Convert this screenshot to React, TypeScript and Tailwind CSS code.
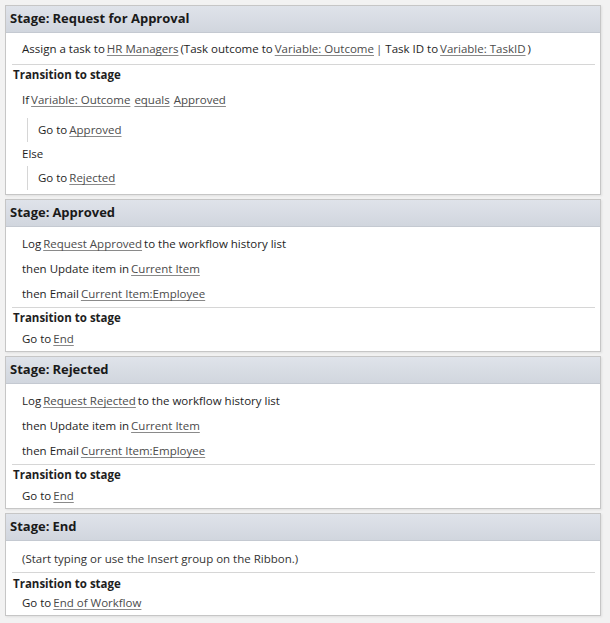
import React from 'react';

// Workflow stage designer view
const Link: React.FC<{ children: React.ReactNode }> = ({ children }) => (
  <span className="mx-[2px] text-[#4b4b4b] underline decoration-[#8a8a8a] underline-offset-[2px]">{children}</span>
);

const Row: React.FC<{ children: React.ReactNode; className?: string }> = ({ children, className = 'h-[24px]' }) => (
  <div className={`flex items-center whitespace-pre ${className}`}>{children}</div>
);

const Header: React.FC<{ title: string }> = ({ title }) => (
  <div className="h-[27px] flex items-center pl-[4px] bg-gradient-to-b from-[#dfe3ea] to-[#d1d6de] border-b border-[#c4c9d1] text-[13px] font-bold text-[#1a1a1a]">
    Stage:<span className="ml-[3px]">{title}</span>
  </div>
);

const Separator = () => <div className="h-px bg-[#d6d6d6] ml-[6px] mr-[5px]" />;

const Transition: React.FC<{ className?: string }> = ({ className = 'h-[20px]' }) => (
  <div className={`flex items-center pl-[7px] font-bold text-[11.5px] ${className}`}>Transition to stage</div>
);

const Card: React.FC<{ children: React.ReactNode }> = ({ children }) => (
  <div className="border border-[#c6c6c6] bg-white shadow-[1px_1px_2px_rgba(0,0,0,0.08)]">{children}</div>
);

const LogStage: React.FC<{ message: string }> = ({ message }) => (
  <div className="pt-[5px] pl-[16px]">
    <Row>
      Log<Link>{message}</Link>to the workflow history list
    </Row>
    <Row className="h-[24px] mt-px">
      then Update item in<Link>Current Item</Link>
    </Row>
    <Row className="h-[24px] mt-px">
      then Email<Link>Current Item:Employee</Link>
    </Row>
  </div>
);

const GoToEnd: React.FC<{ message: string }> = ({ message }) => (
  <Card>
    <Header title={message === 'Request Approved' ? 'Approved' : 'Rejected'} />
    <LogStage message={message} />
    <div className="mt-px">
      <Separator />
    </div>
    <Transition />
    <div className="pl-[16px] pb-px">
      <Row className="h-[22px]">
        Go to<Link>End</Link>
      </Row>
    </div>
  </Card>
);

export default function App() {
  return (
    <div
      className="w-[610px] h-[623px] bg-[#f2f2f2] pt-[5px] pl-[5px] pr-[9px] flex flex-col gap-[4px] text-[11.5px] text-[#1e1e1e]"
      style={{ fontFamily: '"Open Sans", "Noto Sans", sans-serif' }}
    >
      {/* Stage: Request for Approval */}
      <Card>
        <Header title="Request for Approval" />
        <div className="pt-[4px] pl-[16px]">
          <Row>
            Assign a task to<Link>HR Managers</Link>(Task outcome to<Link>Variable: Outcome</Link>
            <span className="text-[#555] mr-[3px]">|</span>Task ID to<Link>Variable: TaskID</Link>)
          </Row>
        </div>
        <div className="mt-[3px]">
          <Separator />
        </div>
        <Transition />
        <div className="pl-[16px] pt-[3px] pb-[4px]">
          <Row>
            If<Link>Variable: Outcome</Link>
            <Link>equals</Link>
            <Link>Approved</Link>
          </Row>
          <div className="ml-[5px] mt-[6px] border-l border-[#d6d6d6] pl-[10px]">
            <Row>
              Go to<Link>Approved</Link>
            </Row>
          </div>
          <Row>Else</Row>
          <div className="ml-[5px] border-l border-[#d6d6d6] pl-[10px]">
            <Row>
              Go to<Link>Rejected</Link>
            </Row>
          </div>
        </div>
      </Card>

      {/* Stage: Approved / Rejected */}
      <GoToEnd message="Request Approved" />
      <GoToEnd message="Request Rejected" />

      {/* Stage: End */}
      <Card>
        <Header title="End" />
        <div className="pt-[6px] pl-[16px]">
          <Row className="h-[24px] text-[#333]">(Start typing or use the Insert group on the Ribbon.)</Row>
        </div>
        <div className="mt-px">
          <Separator />
        </div>
        <Transition className="h-[22px]" />
        <div className="pl-[16px] pb-[4px]">
          <Row className="h-[16px]">
            Go to<Link>End of Workflow</Link>
          </Row>
        </div>
      </Card>
    </div>
  );
}
